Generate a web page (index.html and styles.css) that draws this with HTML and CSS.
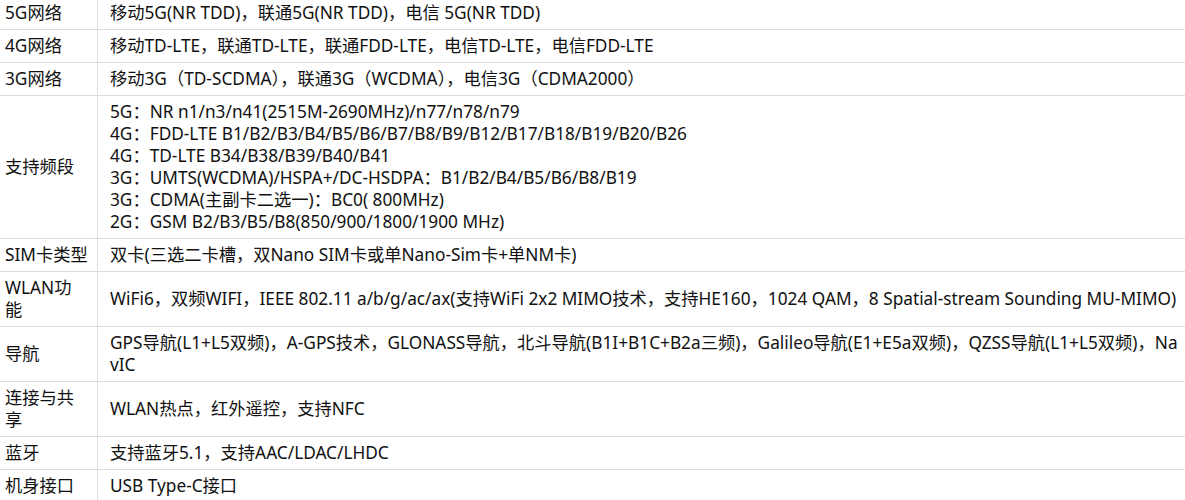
FILE: index.html
```html
<!DOCTYPE html>
<html lang="zh-CN">
<head>
    <meta charset="UTF-8">
    <title>网络与连接参数</title>
    <link rel="stylesheet" href="styles.css">
</head>
<body>
    <table class="spec-table">
        <tr>
            <td class="spec-name">5G网络</td>
            <td class="spec-value">移动5G(NR TDD)，联通5G(NR TDD)，电信 5G(NR TDD)</td>
        </tr>
        <tr>
            <td class="spec-name">4G网络</td>
            <td class="spec-value">移动TD-LTE，联通TD-LTE，联通FDD-LTE，电信TD-LTE，电信FDD-LTE</td>
        </tr>
        <tr>
            <td class="spec-name">3G网络</td>
            <td class="spec-value">移动3G（TD-SCDMA），联通3G（WCDMA），电信3G（CDMA2000）</td>
        </tr>
        <tr>
            <td class="spec-name">支持频段</td>
            <td class="spec-value">
                5G：NR n1/n3/n41(2515M-2690MHz)/n77/n78/n79<br>
                4G：FDD-LTE B1/B2/B3/B4/B5/B6/B7/B8/B9/B12/B17/B18/B19/B20/B26<br>
                4G：TD-LTE B34/B38/B39/B40/B41<br>
                3G：UMTS(WCDMA)/HSPA+/DC-HSDPA：B1/B2/B4/B5/B6/B8/B19<br>
                3G：CDMA(主副卡二选一)：BC0( 800MHz)<br>
                2G：GSM B2/B3/B5/B8(850/900/1800/1900 MHz)
            </td>
        </tr>
        <tr>
            <td class="spec-name">SIM卡类型</td>
            <td class="spec-value">双卡(三选二卡槽，双Nano SIM卡或单Nano-Sim卡+单NM卡)</td>
        </tr>
        <tr>
            <td class="spec-name">WLAN功<br>能</td>
            <td class="spec-value">WiFi6，双频WIFI，IEEE 802.11 a/b/g/ac/ax(支持WiFi 2x2 MIMO技术，支持HE160，1024 QAM，8 Spatial-stream Sounding MU-MIMO)</td>
        </tr>
        <tr>
            <td class="spec-name">导航</td>
            <td class="spec-value">GPS导航(L1+L5双频)，A-GPS技术，GLONASS导航，北斗导航(B1I+B1C+B2a三频)，Galileo导航(E1+E5a双频)，QZSS导航(L1+L5双频)，NavIC</td>
        </tr>
        <tr>
            <td class="spec-name">连接与共享</td>
            <td class="spec-value">WLAN热点，红外遥控，支持NFC</td>
        </tr>
        <tr>
            <td class="spec-name">蓝牙</td>
            <td class="spec-value">支持蓝牙5.1，支持AAC/LDAC/LHDC</td>
        </tr>
        <tr>
            <td class="spec-name">机身接口</td>
            <td class="spec-value">USB Type-C接口</td>
        </tr>
    </table>
</body>
</html>
```

FILE: styles.css
```css
body {
    margin: 0;
    background: #fff;
    font-family: "Noto Sans", "Noto Sans CJK SC", sans-serif;
    font-size: 17.25px;
    color: #111;
}
.spec-table {
    width: 1185px;
    margin-top: -3px;
    border-collapse: collapse;
    table-layout: fixed;
}
.spec-table td {
    border-bottom: 1px solid #ddd;
    line-height: 22px;
    vertical-align: middle;
}
.spec-name {
    width: 84px;
    padding: 5px 8px 5px 5px;
    border-right: 1px solid #ddd;
}
.spec-value {
    padding: 5px 2px 5px 12px;
    word-break: break-all;
}
```
